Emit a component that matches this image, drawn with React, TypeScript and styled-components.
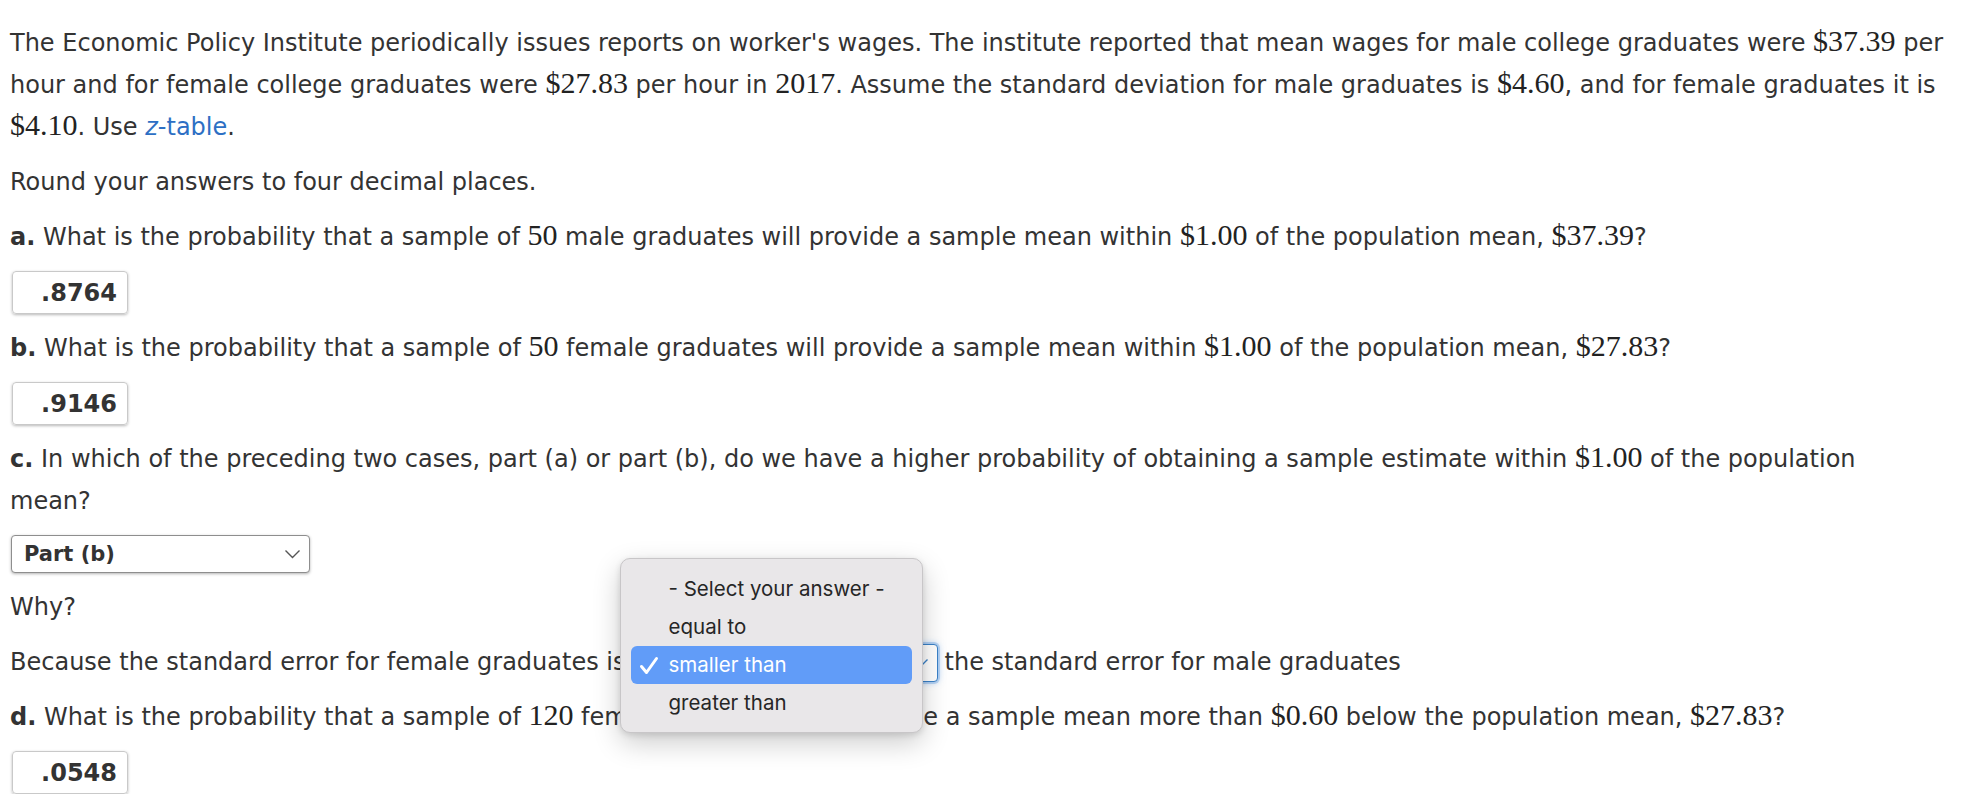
import React from "react";
import styled, { createGlobalStyle } from "styled-components";

const Global = createGlobalStyle`
  html, body { margin: 0; padding: 0; background: #ffffff; }
  body { font-family: "DejaVu Sans", "Liberation Sans", sans-serif; color: #333333; }
`;

const Page = styled.div`
  display: flex;
  flex-direction: column;
  align-items: flex-start;
  gap: 13px;
  padding: 22px 11px 0 10px;
  width: 1966px;
  box-sizing: border-box;
  font-size: 24px;
  line-height: 42px;
`;

const Para = styled.p`
  margin: 0;
`;

const M = styled.span`
  font-family: "Liberation Serif", "DejaVu Serif", serif;
  font-size: 1.25em;
  line-height: 1;
  color: #222;
`;

const Label = styled.b`
  font-weight: 700;
`;

const Link = styled.a`
  color: #2d6fc4;
  text-decoration: none;
  i { font-style: italic; }
`;

const AnswerBox = styled.div`
  width: 116px;
  height: 43px;
  margin-left: 2px;
  box-sizing: border-box;
  border: 1px solid #c9c9c9;
  border-radius: 4px;
  box-shadow: 0 1px 3px rgba(0, 0, 0, 0.28);
  display: flex;
  align-items: center;
  justify-content: flex-end;
  padding-right: 10px;
  font-weight: 700;
  font-size: 24px;
  color: #333;
`;

const SelectBox = styled.div<{ $width: number; $focused?: boolean }>`
  position: relative;
  width: ${(p) => p.$width}px;
  height: 38px;
  box-sizing: border-box;
  border: 1px solid ${(p) => (p.$focused ? "#3b82c8" : "#8e8e8e")};
  border-radius: 4px;
  box-shadow: ${(p) =>
    p.$focused
      ? "0 0 0 2px rgba(80,150,230,0.3), 0 0 7px rgba(80,150,230,0.55)"
      : "0 1px 3px rgba(0,0,0,0.3)"};
  display: flex;
  align-items: center;
  justify-content: space-between;
  padding: 0 8px 0 12px;
  font-weight: 700;
  font-size: 21px;
  line-height: 1;
  color: #333;
  background: #fff;
`;

const SelectRow = styled.div`
  margin: 0 0 0 1px;
`;

const InlineWrap = styled.span`
  position: relative;
  display: inline-block;
  vertical-align: middle;
  margin: -6px 7px -6px 2px;
`;

const Popup = styled.div`
  position: absolute;
  left: -8px;
  top: -86px;
  width: 303px;
  box-sizing: border-box;
  padding: 11px 10px 10px;
  background: #e9e7e9;
  border: 1px solid #c8c6c8;
  border-radius: 10px;
  box-shadow: 0 10px 28px rgba(0, 0, 0, 0.2), 0 2px 6px rgba(0, 0, 0, 0.12);
  display: flex;
  flex-direction: column;
  z-index: 10;
`;

const Option = styled.div<{ $selected?: boolean }>`
  position: relative;
  height: 38px;
  display: flex;
  align-items: center;
  padding-left: 38px;
  border-radius: 6px;
  font-family: "Inter", "Noto Sans", sans-serif;
  font-size: 20.5px;
  line-height: 1;
  font-weight: 400;
  color: ${(p) => (p.$selected ? "#ffffff" : "#262626")};
  background: ${(p) => (p.$selected ? "#619cf8" : "transparent")};
`;

const Check = styled.svg`
  position: absolute;
  left: 8px;
  top: 10px;
`;

const Chevron = ({ color = "#555" }: { color?: string }) => (
  <svg width="17" height="10" viewBox="0 0 17 10">
    <path d="M1.5 1.5 L8.5 8.5 L15.5 1.5" fill="none" stroke={color} strokeWidth="1.4" />
  </svg>
);

export default function App() {
  return (
    <>
      <Global />
      <Page>
        <Para>
          The Economic Policy Institute periodically issues reports on worker's wages. The institute reported that
          mean wages for male college graduates were <M>$37.39</M> per hour and for female college graduates were{" "}
          <M>$27.83</M> per hour in <M>2017</M>. Assume the standard deviation for male graduates is <M>$4.60</M>, and
          for female graduates it is <M>$4.10</M>. Use{" "}
          <Link href="#">
            <i>z</i>-table
          </Link>
          .
        </Para>
        <Para>Round your answers to four decimal places.</Para>
        <Para>
          <Label>a.</Label> What is the probability that a sample of <M>50</M> male graduates will provide a sample mean
          within <M>$1.00</M> of the population mean, <M>$37.39</M>?
        </Para>
        <AnswerBox>.8764</AnswerBox>
        <Para>
          <Label>b.</Label> What is the probability that a sample of <M>50</M> female graduates will provide a sample
          mean within <M>$1.00</M> of the population mean, <M>$27.83</M>?
        </Para>
        <AnswerBox>.9146</AnswerBox>
        <Para>
          <Label>c.</Label> In which of the preceding two cases, part (a) or part (b), do we have a higher probability of
          obtaining a sample estimate within <M>$1.00</M> of the population
          <br />
          mean?
        </Para>
        <SelectRow>
          <SelectBox $width={299}>
            <span>Part (b)</span>
            <Chevron />
          </SelectBox>
        </SelectRow>
        <Para>Why?</Para>
        <Para>
          Because the standard error for female graduates is
          <InlineWrap>
            <SelectBox $width={310} $focused>
              <span>smaller than</span>
              <Chevron color="#3b82c8" />
            </SelectBox>
            <Popup>
              <Option>- Select your answer -</Option>
              <Option>equal to</Option>
              <Option $selected>
                <Check width="20" height="19" viewBox="0 0 20 19">
                  <path d="M2.5 10.5 L7.5 16.5 L17.5 2.5" fill="none" stroke="#fff" strokeWidth="3" strokeLinecap="round" strokeLinejoin="round" />
                </Check>
                smaller than
              </Option>
              <Option>greater than</Option>
            </Popup>
          </InlineWrap>
          the standard error for male graduates
        </Para>
        <Para>
          <Label>d.</Label> What is the probability that a sample of <M>120</M> female graduates will provide a sample
          mean more than <M>$0.60</M> below the population mean, <M>$27.83</M>?
        </Para>
        <AnswerBox>.0548</AnswerBox>
      </Page>
    </>
  );
}
